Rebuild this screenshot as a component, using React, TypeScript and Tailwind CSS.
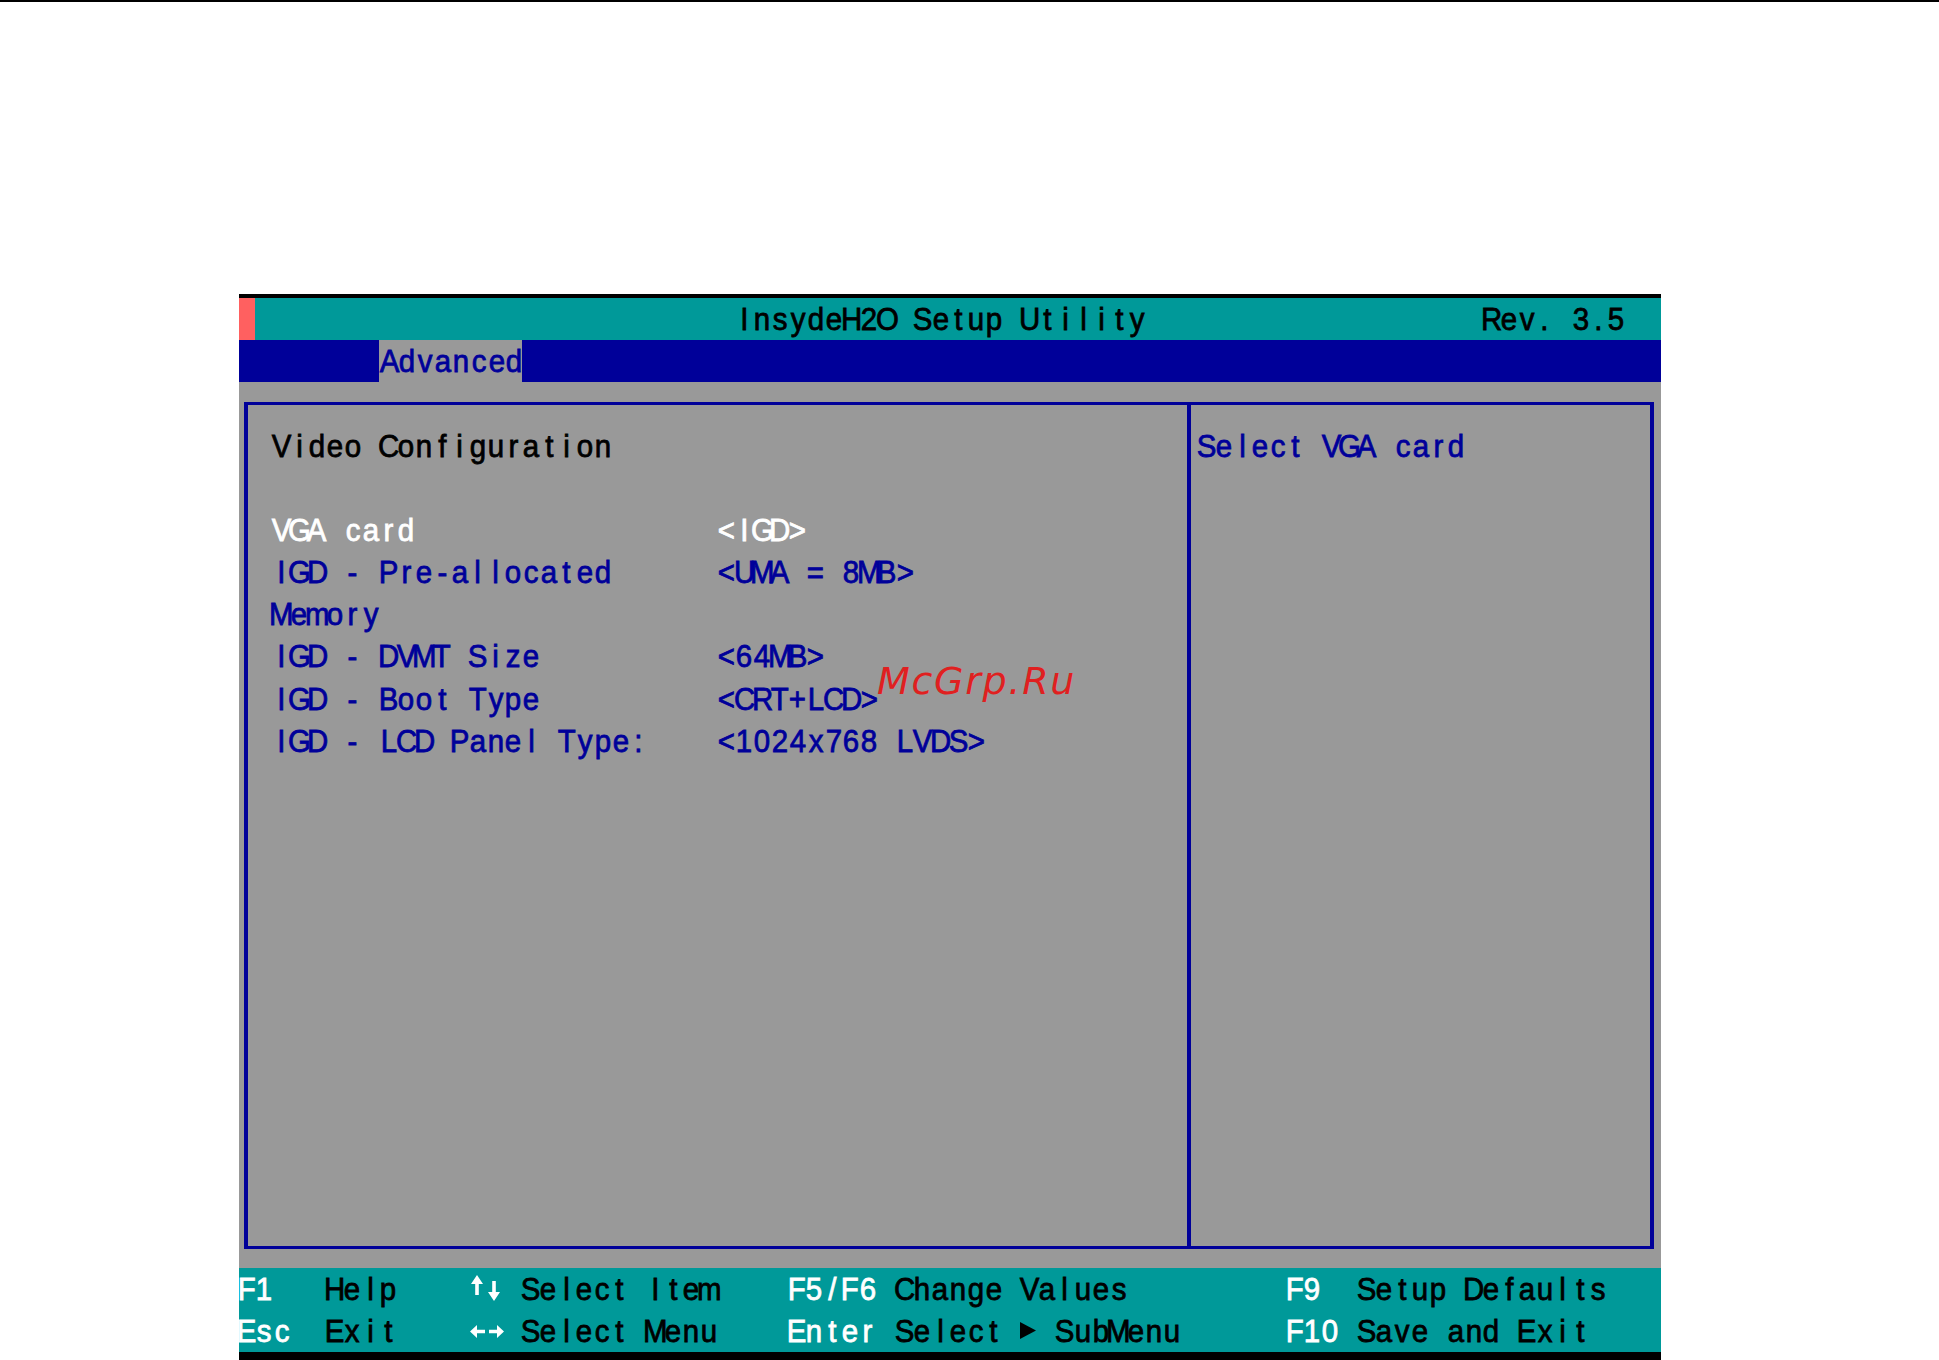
import React from 'react';

// every glyph sits in a fixed cell, like the BIOS text mode
const Cells = ({ text, className = '' }: { text: string; className?: string }) => (
  <span className={`inline-flex pl-[1.5px] ${className}`}>
    {[...text].map((c, i) => (
      <span key={i} className="flex w-[17.85px] justify-center">
        <span className="inline-block scale-x-[0.92] whitespace-pre [-webkit-text-stroke:0.8px_currentColor]">{c}</span>
      </span>
    ))}
  </span>
);

const rows = [
  { label: 'VGA card', value: '<IGD>', active: true },
  { label: 'IGD - Pre-allocated', value: '<UMA = 8MB>' },
  { label: 'Memory', value: '' },
  { label: 'IGD - DVMT Size', value: '<64MB>' },
  { label: 'IGD - Boot Type', value: '<CRT+LCD>' },
  { label: 'IGD - LCD Panel Type:', value: '<1024x768 LVDS>' },
];

const UpDown = () => (
  <svg width="31" height="26" viewBox="0 0 31 26" fill="#fff" className="mt-[-3px]">
    <path d="M7 0 13 9H8.8V20H5.2V9H1Z" />
    <path d="M24 26 18 17H22.2V6H25.8V17H30Z" />
  </svg>
);

const LeftRight = () => (
  <svg width="34" height="15" viewBox="0 0 34 15" fill="#fff">
    <path d="M0 7.5 7 1V5.8H15V9.2H7V14Z" />
    <path d="M34 7.5 27 1V5.8H19V9.2H27V14Z" />
  </svg>
);

const Triangle = () => (
  <svg width="16" height="17" viewBox="0 0 16 17" fill="#000" className="ml-[126px]">
    <path d="M0 0 16 8.5 0 17Z" />
  </svg>
);

export default function App() {
  return (
    <div className="flex h-[1360px] w-[1939px] flex-col overflow-hidden bg-white font-['Liberation_Sans',Arial,sans-serif] text-[32px] leading-[42px]">
      <div className="h-[2px] bg-black" />

      <div className="ml-[239px] mt-[292px] flex w-[1422px] flex-1 flex-col overflow-hidden border-t-4 border-black bg-[#999999]">
        <div className="flex h-[42px] items-center bg-[#009999] text-black">
          <div className="h-full w-[16px] bg-[#ff6060]" />
          <Cells text="InsydeH2O Setup Utility" className="ml-[479px]" />
          <Cells text="Rev. 3.5" className="ml-[335px]" />
        </div>

        <div className="flex h-[42px] bg-[#000099] pl-[140px]">
          <div className="h-full w-[143px] bg-[#999999] text-[#000099]">
            <Cells text="Advanced" />
          </div>
        </div>

        <div className="relative ml-[5px] mt-[20px] flex h-[847px] w-[1410px] border-x-4 border-y-[3px] border-[#000099] text-[#000099]">
          <div className="w-[943px] border-r-4 border-[#000099] pl-[23px] pt-[20px]">
            <div className="h-[83.6px] text-black">
              <Cells text="Video Configuration" />
            </div>
            <div className="grid grid-cols-[445px_1fr] auto-rows-[42.3px]">
              {rows.map(r => (
                <React.Fragment key={r.label}>
                  <Cells text={r.label} className={r.active ? 'text-white' : ''} />
                  <Cells text={r.value} className={r.active ? 'text-white' : ''} />
                </React.Fragment>
              ))}
            </div>
          </div>
          <div className="flex-1 pl-[5px] pt-[20px]">
            <Cells text="Select VGA card" />
          </div>
          {/* site watermark over the panel */}
          <span className="absolute left-[629px] top-[252px] font-['DejaVu_Sans',sans-serif] text-[38px] italic leading-[48px] tracking-[1.7px] text-[#e02020]">
            McGrp.Ru
          </span>
        </div>

        <div className="mt-[19px] grid h-[84px] grid-cols-[85px_146px_50px_268px_106px_392px_70px_1fr] grid-rows-2 bg-[#009999] text-black">
          <Cells text="F1" className="-ml-[3px] text-white" />
          <Cells text="Help" />
          <div className="flex items-center"><UpDown /></div>
          <Cells text="Select Item" />
          <Cells text="F5/F6" className="-ml-[2px] text-white" />
          <Cells text="Change Values" />
          <Cells text="F9" className="-ml-[2px] text-white" />
          <Cells text="Setup Defaults" />

          <Cells text="Esc" className="-ml-[3px] text-white" />
          <Cells text="Exit" />
          <div className="flex items-center"><LeftRight /></div>
          <Cells text="Select Menu" />
          <Cells text="Enter" className="-ml-[2px] text-white" />
          <div className="relative">
            <Cells text="Select   SubMenu" />
            <div className="absolute left-0 top-[12px]"><Triangle /></div>
          </div>
          <Cells text="F10" className="-ml-[2px] text-white" />
          <Cells text="Save and Exit" />
        </div>

        <div className="h-[8px] bg-black" />
      </div>
    </div>
  );
}
